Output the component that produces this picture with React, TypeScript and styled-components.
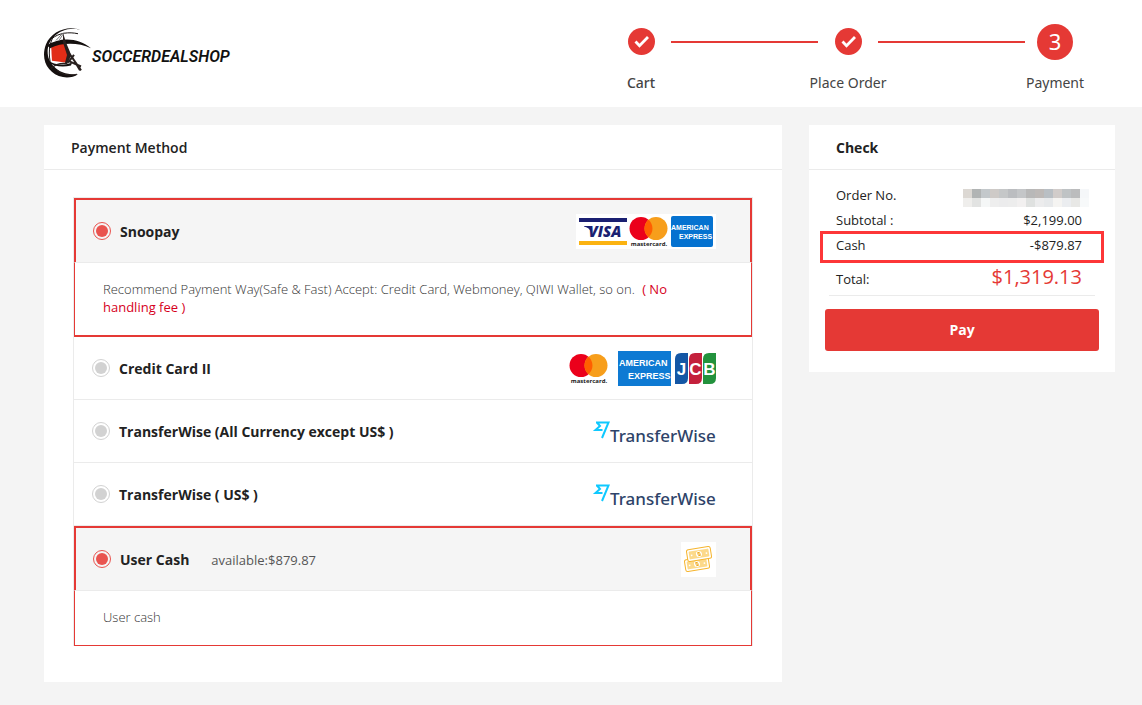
import React from "react";
import styled, { createGlobalStyle, css } from "styled-components";

const Global = createGlobalStyle`
  * { box-sizing: border-box; }
  body {
    margin: 0;
    background: #f4f4f4;
    color: #222;
    font-family: "Open Sans", "Noto Sans", sans-serif;
    font-size: 13px;
    line-height: 18px;
  }
  h2, p, ol, dl, dd { margin: 0; padding: 0; }
`;

const RED = "#e53935";

const Header = styled.header`
  display: flex;
  justify-content: space-between;
  align-items: flex-start;
  height: 107px;
  padding: 23px 57px 0 42px;
  background: #fff;
`;

const Brand = styled.a`
  display: flex;
  align-items: center;
  height: 60px;
  color: #111;
  text-decoration: none;
  svg { display: block; }
`;

const BrandName = styled.span`
  font: italic 600 16px/20px Roboto, sans-serif;
  padding-top: 8px;
`;

const Steps = styled.ol`
  display: flex;
  list-style: none;
`;

const Step = styled.li`
  display: flex;
  flex-direction: column;
  align-items: center;
  width: 60px;
  color: #444;
  font: 400 14px/20px "Noto Sans", sans-serif;
  white-space: nowrap;
`;

const Marker = styled.span`
  display: flex;
  align-items: center;
  justify-content: center;
  height: 37px;
  margin-bottom: 13px;
`;

const StepNumber = styled.span`
  width: 36px;
  height: 36px;
  border-radius: 50%;
  background: ${RED};
  color: #fff;
  font-size: 22px;
  line-height: 34px;
  text-align: center;
`;

const StepLabel = styled.span<{ $strong?: boolean }>`
  font-weight: ${(p) => (p.$strong ? 500 : 400)};
`;

const Connector = styled.li`
  width: 147px;
  height: 2px;
  margin-top: 18px;
  background: ${RED};
`;

const Main = styled.main`
  display: grid;
  grid-template-columns: minmax(0, 1fr) 306px;
  align-items: start;
  gap: 27px;
  padding: 18px 27px 23px 44px;
`;

const Panel = styled.section`
  background: #fff;
`;

const PanelTitle = styled.h2<{ $weight: number }>`
  height: 45px;
  padding: 0 27px;
  border-bottom: 1px solid #ebebeb;
  font-size: 14px;
  font-weight: ${(p) => p.$weight};
  line-height: 45px;
`;

const Methods = styled.div`
  margin: 27px 29px 36px;
  border: 1px solid #ebebeb;
  border-bottom: 0;
`;

const Method = styled.div<{ $last?: boolean }>`
  border-bottom: ${(p) => (p.$last ? 0 : 1)}px solid #ebebeb;
`;

const MethodHead = styled.label<{ $active?: boolean }>`
  display: flex;
  align-items: center;
  height: 62px;
  padding: 0 36px 0 18px;
  ${(p) =>
    p.$active &&
    css`
      height: 64px;
      padding: 0 34px 0 17px;
      border: 2px solid ${RED};
      border-bottom: 0;
      background: #f5f5f5;
    `}
`;

const MethodBody = styled.div<{ $thick?: boolean }>`
  padding: 17px 60px 19px 28px;
  border: 1px solid ${RED};
  border-top-color: #ebebeb;
  border-bottom-width: ${(p) => (p.$thick ? 2 : 1)}px;
  color: #333;
  font-weight: 300;
`;

const Fee = styled.span`
  margin-left: 4px;
  color: #d6001c;
  font-weight: 400;
`;

const Radio = styled.input`
  appearance: none;
  flex: none;
  width: 18px;
  height: 18px;
  margin: 0 9px 0 0;
  border: 1px solid #d2d2d2;
  border-radius: 50%;
  background: #d2d2d2;
  background-clip: content-box;
  padding: 2px;
  &:checked {
    border-color: #e9534f;
    background-color: #e9534f;
  }
`;

const MethodName = styled.span`
  padding-top: 2px;
  font-size: 14px;
  font-weight: 700;
`;

const Available = styled.span`
  margin-left: 22px;
  padding-top: 2px;
  color: #555;
`;

const Logos = styled.span`
  display: flex;
  margin-left: auto;
  svg { display: block; }
`;

const Summary = styled.dl`
  margin: 0 20px 13px;
  padding: 12px 13px 0 7px;
  border-bottom: 1px solid #ebebeb;
  color: #222;
`;

const Line = styled.div`
  position: relative;
  display: flex;
  align-items: center;
  justify-content: space-between;
  height: 25px;
`;

const Highlight = styled.span`
  position: absolute;
  inset: -1px -22px -6px -16px;
  border: 3px solid #fd3638;
`;

const Total = styled(Line)`
  height: 38px;
  padding-top: 6px;
  dd {
    padding-bottom: 4px;
    color: ${RED};
    font-size: 20px;
    line-height: 28px;
  }
`;

const OrderNumber = styled.dd`
  margin-right: -7px;
  padding-top: 6px;
  svg { display: block; }
`;

const PayButton = styled.button`
  display: block;
  width: calc(100% - 32px);
  height: 42px;
  margin: 0 16px 21px;
  border: 0;
  border-radius: 3px;
  background: ${RED};
  color: #fff;
  font: 700 14px/20px "Open Sans", sans-serif;
`;

const CheckMark = () => (
  <svg width="28" height="28" viewBox="0 0 28 28" aria-hidden="true">
    <circle cx="14.500" cy="13.500" r="13.500" fill={RED} />
    <path d="M8.500 13.500l4 4.200 8.500-8.700" fill="none" stroke="#fff" strokeWidth="2.800" strokeLinejoin="miter" />
  </svg>
);

const BallLogo = () => (
  <svg width="50" height="54" viewBox="0 0 50 56" preserveAspectRatio="none" aria-hidden="true">
    <path d="M9 19l14-2 5 12-3 9-15-2z" fill="#e12d17" />
    <path d="M38 4C25-1 9 6 4 19-2 35 6 50 21 53c5 1 11 0 15-3-10 1-19-2-24-8C3 33 4 19 12 11 18 5 28 1 38 4z" fill="#15100f" />
    <path d="M5 20C18 11 37 12 49 23 36 17 20 17 8 23z" fill="#15100f" />
    <path d="M10 13c7-6 17-7 26-5M12 10c-5 8-6 19-3 31" fill="none" stroke="#15100f" strokeWidth="1" />
    <path d="M14 15l7-8M17 15l5-8" fill="none" stroke="#777" strokeWidth="1" />
    <path d="M21 7l3 10 4 10 1 4-4 9-2-2 2-8-4-13z" fill="#29201e" />
    <path d="M5 35c8 6 16 6 25 3l-1 3c-9 2-17 1-23-4z" fill="#15100f" />
    <path d="M27 28l12 18M30 32l8 14M26 38l6-8M28 37l11 5" fill="none" stroke="#29201e" strokeWidth="2" />
    <path d="M9 44c4-4 9-6 16-5M15 46c5 4 12 6 20 4" fill="none" stroke="#29201e" strokeWidth="1.200" />
  </svg>
);

const Mastercard = ({ x, y }: { x: number; y: number }) => (
  <g transform={`translate(${x} ${y})`}>
    <circle cx="12" cy="11.500" r="11.500" fill="#eb001b" />
    <circle cx="27" cy="11.500" r="11.500" fill="#f79e1b" />
    <path d="M19.500 2.800a11.500 11.500 0 0 1 0 17.400a11.500 11.500 0 0 1 0-17.400z" fill="#ff5f00" />
    <text x="20" y="29" textAnchor="middle" fontFamily="Open Sans, sans-serif" fontSize="6" fontWeight="700" fill="#222">mastercard.</text>
  </g>
);

const CardsOne = () => (
  <svg width="140" height="35" viewBox="0 0 140 35" role="img" aria-label="Visa, Mastercard, American Express">
    <rect width="140" height="35" fill="#fff" />
    <rect x="3" y="4" width="48" height="4" fill="#1a1f71" />
    <rect x="3" y="27" width="48" height="4" fill="#fbb311" />
    <path d="M8 12h6l2 4-1 2c-1-3-4-5-7-5.500z" fill="#1a1f71" />
    <text x="29" y="23" textAnchor="middle" fontFamily="Open Sans, sans-serif" fontSize="15" fontWeight="800" fontStyle="italic" fill="#1a1f71">VISA</text>
    <Mastercard x={53} y={3} />
    <rect x="95" y="2" width="42" height="31" rx="2" fill="#0572d0" />
    <g fontFamily="Liberation Sans, sans-serif" fontSize="7" fontWeight="700" fill="#fff">
      <text x="95" y="16">AMERICAN</text>
      <text x="103" y="25">EXPRESS</text>
    </g>
  </svg>
);

const JcbBar = ({ x, fill, letter }: { x: number; fill: string; letter: string }) => (
  <g>
    <path d={`M${x} 8q0-6 6-6h7v25q0 6-6 6h-7z`} fill={fill} />
    <text x={x + 6.5} y="24" textAnchor="middle" fontFamily="Liberation Sans, sans-serif" fontSize="17" fontWeight="700" fill="#fff">{letter}</text>
  </g>
);

const CardsTwo = () => (
  <svg width="154" height="35" viewBox="0 0 154 35" role="img" aria-label="Mastercard, American Express, JCB">
    <Mastercard x={7} y={3} />
    <rect x="56" width="53" height="35" fill="#0e7ad3" />
    <g fontFamily="Liberation Sans, sans-serif" fontSize="9" fontWeight="700" fill="#fff">
      <text x="57" y="15">AMERICAN</text>
      <text x="66" y="28">EXPRESS</text>
    </g>
    <JcbBar x={113} fill="#1457a5" letter="J" />
    <JcbBar x={127} fill="#c4203c" letter="C" />
    <JcbBar x={141} fill="#23923d" letter="B" />
  </svg>
);

const TransferWise = () => (
  <svg width="124" height="35" viewBox="0 0 124 35" role="img" aria-label="TransferWise">
    <path d="M4 8.500H16.500L10 24M5 8.500l3 3.500-4.500 4h7" fill="none" stroke="#0fc9ff" strokeWidth="2" />
    <text x="18" y="28" fontFamily="Noto Sans, sans-serif" fontSize="17" fontWeight="500" fill="#2e4369">TransferWise</text>
  </svg>
);

const CashIcon = () => (
  <svg width="35" height="35" viewBox="0 0 35 35" aria-hidden="true">
    <rect width="35" height="35" fill="#fff" />
    {[[16, 22], [18, 12]].map(([x, y]) => (
      <g key={x} transform={`translate(${x} ${y}) rotate(-9)`}>
        <rect x="-12" y="-6" width="24" height="12" rx="2" fill="#fff" stroke="#f6b52e" />
        <rect x="-10" y="-4" width="20" height="8" rx="1" fill="#fcd98a" />
        <circle r="3" fill="#fff" />
        <path d="M1-1.500h-2v1.500h2v1.500h-2" fill="none" stroke="#f0ab20" />
        <path d="M-7.500-.5v1.500M7.500-.5v1.500" stroke="#fff" strokeWidth="1.500" />
      </g>
    ))}
  </svg>
);

const MOSAIC = [
  ["#dcd8d3", "#b1b4b4", "#c3c8cb", "#cecac7", "#c5c7c8", "#bbbdc0", "#c4c6c8", "#b8b8b8", "#bdb9b7", "#b9bfc4", "#d1ccca", "#bfc3c5", "#bbbcbd", "#f5f7f9"],
  ["#efeeec", "#e2e3e2", "#f5f7f7", "#eeeeee", "#ececed", "#ededed", "#f2f0f0", "#dfe1e0", "#ececed", "#e7e9eb", "#f5f4f2", "#ebedf0", "#e8e8e6", "#f7f9fa"],
];

const HiddenNumber = () => (
  <svg width="126" height="18" viewBox="0 0 126 18" role="img" aria-label="Hidden order number" shapeRendering="crispEdges">
    {MOSAIC.map((row, y) =>
      row.map((fill, x) => <rect key={`${x}-${y}`} x={x * 9} y={y * 9} width="9" height="9" fill={fill} />)
    )}
  </svg>
);

export default function App() {
  return (
    <>
      <Global />
      <Header>
        <Brand href="#">
          <BallLogo />
          <BrandName>SOCCERDEALSHOP</BrandName>
        </Brand>
        <Steps>
          <Step>
            <Marker><CheckMark /></Marker>
            <StepLabel $strong>Cart</StepLabel>
          </Step>
          <Connector aria-hidden="true" />
          <Step>
            <Marker><CheckMark /></Marker>
            <StepLabel>Place Order</StepLabel>
          </Step>
          <Connector aria-hidden="true" />
          <Step aria-current="step">
            <Marker><StepNumber>3</StepNumber></Marker>
            <StepLabel>Payment</StepLabel>
          </Step>
        </Steps>
      </Header>
      <Main>
        <Panel>
          <PanelTitle $weight={600}>Payment Method</PanelTitle>
          <Methods>
            <Method $last>
              <MethodHead $active>
                <Radio type="radio" name="gateway" defaultChecked />
                <MethodName>Snoopay</MethodName>
                <Logos><CardsOne /></Logos>
              </MethodHead>
              <MethodBody $thick>
                Recommend Payment Way(Safe &amp; Fast) Accept: Credit Card, Webmoney, QIWI Wallet, so on.{" "}
                <Fee>( No handling fee )</Fee>
              </MethodBody>
            </Method>
            <Method>
              <MethodHead>
                <Radio type="radio" name="gateway" />
                <MethodName>Credit Card II</MethodName>
                <Logos><CardsTwo /></Logos>
              </MethodHead>
            </Method>
            <Method>
              <MethodHead>
                <Radio type="radio" name="gateway" />
                <MethodName>TransferWise (All Currency except US$ )</MethodName>
                <Logos><TransferWise /></Logos>
              </MethodHead>
            </Method>
            <Method>
              <MethodHead>
                <Radio type="radio" name="gateway" />
                <MethodName>TransferWise ( US$ )</MethodName>
                <Logos><TransferWise /></Logos>
              </MethodHead>
            </Method>
            <Method $last>
              <MethodHead $active>
                <Radio type="radio" name="balance" defaultChecked />
                <MethodName>User Cash</MethodName>
                <Available>available:$879.87</Available>
                <Logos><CashIcon /></Logos>
              </MethodHead>
              <MethodBody>User cash</MethodBody>
            </Method>
          </Methods>
        </Panel>
        <Panel>
          <PanelTitle $weight={700}>Check</PanelTitle>
          <Summary>
            <Line>
              <dt>Order No.</dt>
              <OrderNumber><HiddenNumber /></OrderNumber>
            </Line>
            <Line>
              <dt>Subtotal :</dt>
              <dd>$2,199.00</dd>
            </Line>
            <Line>
              <dt>Cash</dt>
              <dd>-$879.87<Highlight /></dd>
            </Line>
            <Total>
              <dt>Total:</dt>
              <dd>$1,319.13</dd>
            </Total>
          </Summary>
          <PayButton type="button">Pay</PayButton>
        </Panel>
      </Main>
    </>
  );
}
